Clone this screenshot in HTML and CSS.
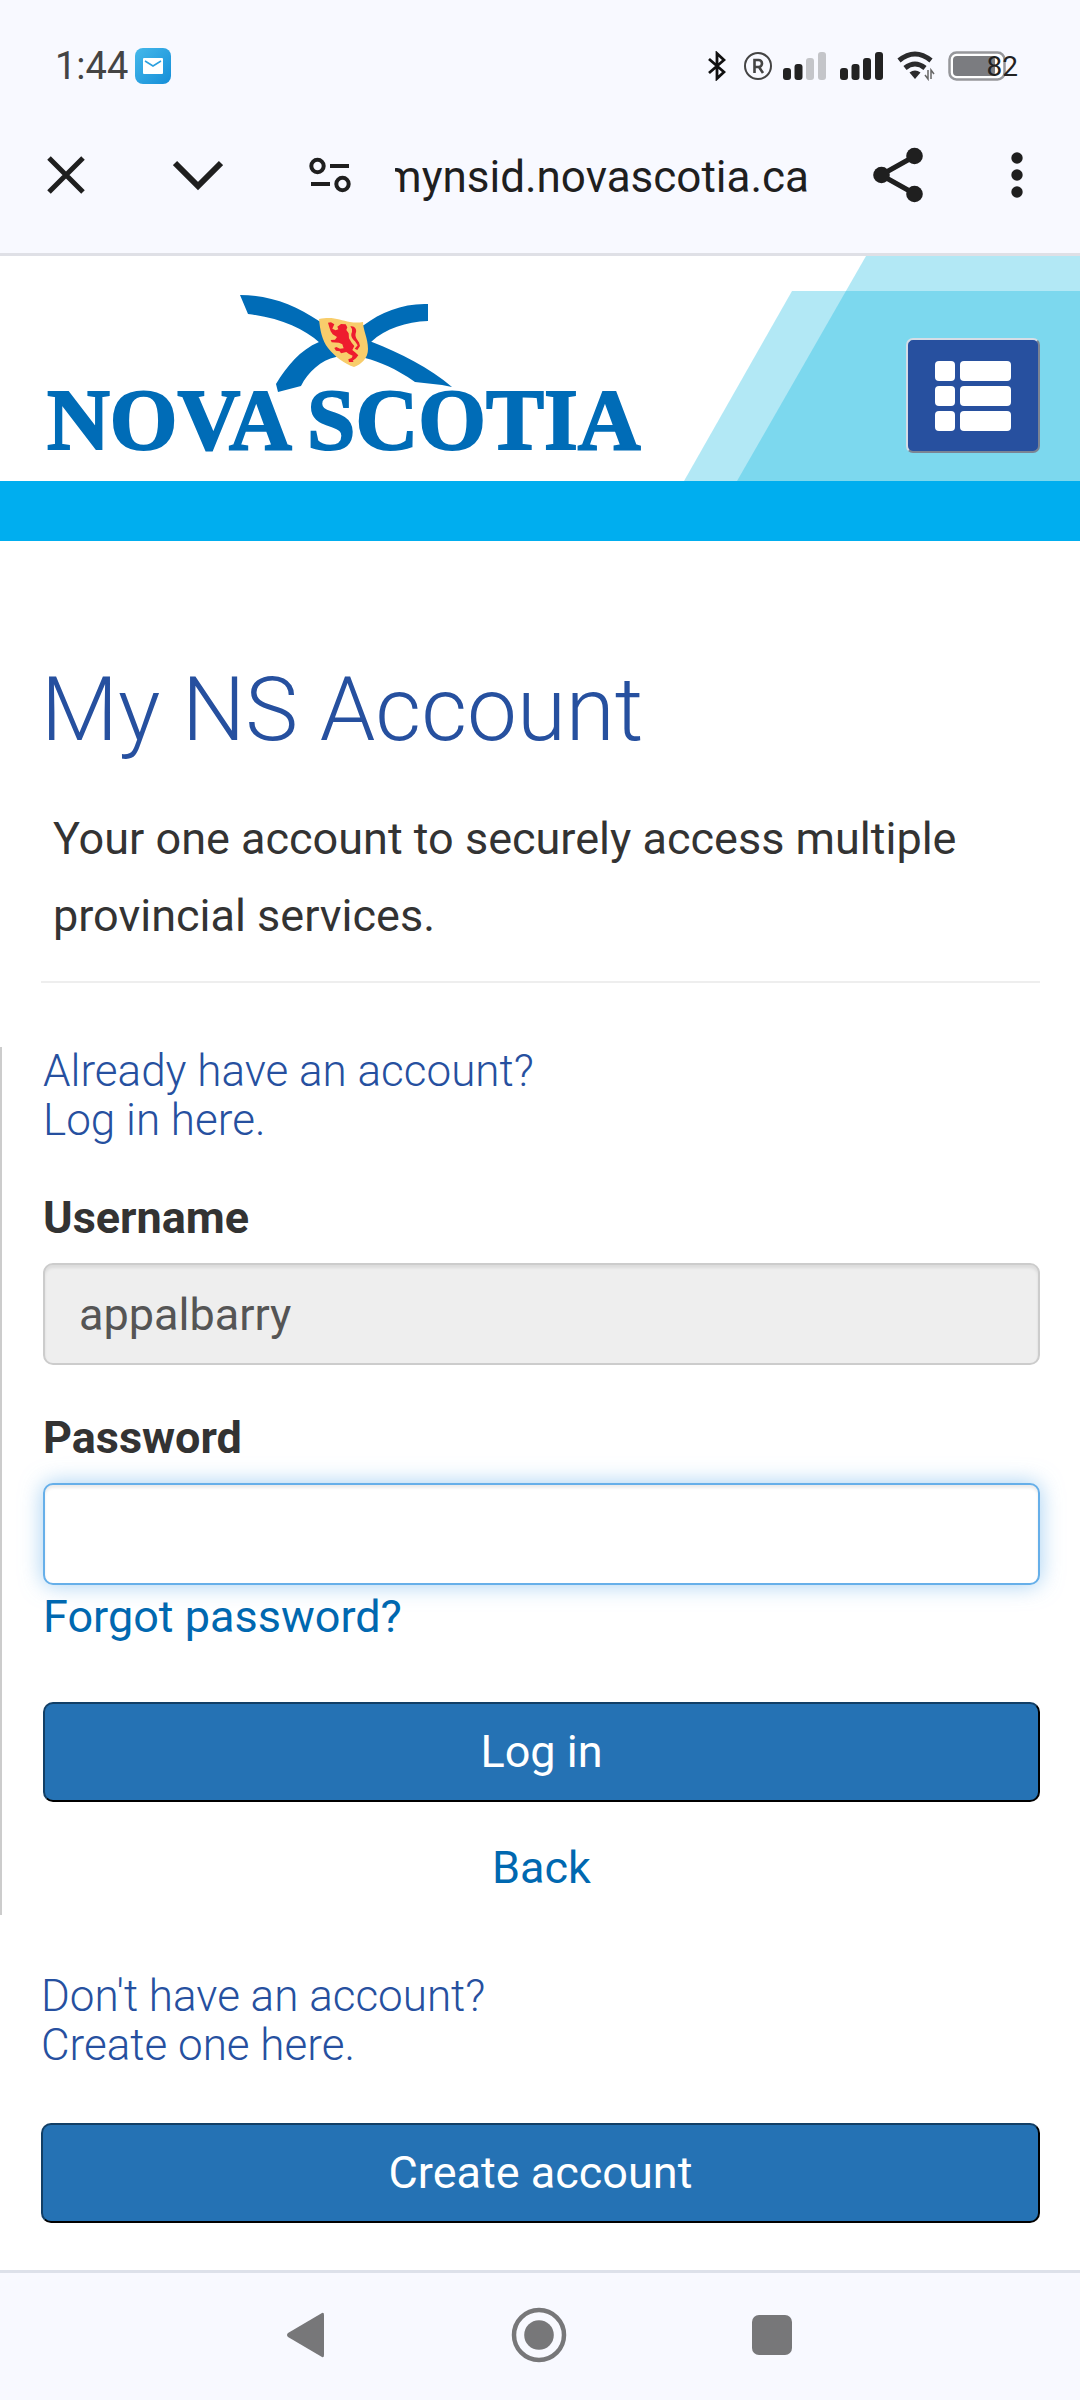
FILE: index.html
```html
<!DOCTYPE html>
<html lang="en">
<head>
  <meta charset="UTF-8">
  <meta name="viewport" content="width=device-width, initial-scale=1.0">
  <title>My NS Account</title>
  <link rel="stylesheet" href="styles.css">
</head>
<body>
  <!-- Status bar -->
  <div class="status-bar">
    <span class="clock">1:44</span>
    <svg class="mail-icon" width="36" height="36" viewBox="0 0 36 36">
      <defs>
        <linearGradient id="mail-bg" x1="0" y1="0" x2="1" y2="1">
          <stop offset="0" stop-color="#45b8ea"></stop>
          <stop offset="1" stop-color="#158ed8"></stop>
        </linearGradient>
      </defs>
      <rect width="36" height="36" rx="8" fill="url(#mail-bg)"></rect>
      <rect x="8" y="10" width="20" height="16" rx="1" fill="#fff"></rect>
      <path d="M10 13l8 5 8-5" fill="none" stroke="#2ba0df" stroke-width="1.5"></path>
    </svg>
    <div class="status-icons">
      <svg width="18" height="30" viewBox="0 0 18 30" fill="none" stroke="#111" stroke-width="2.8">
        <path d="M1 8l15 13-7 6.500V2.500L16 9 1 22"></path>
      </svg>
      <svg class="registered" width="30" height="30" viewBox="0 0 30 30" fill="none" stroke="#444" stroke-width="2">
        <circle cx="15" cy="15" r="13"></circle>
        <path d="M11.500 22V9h4a3.500 3.500 0 0 1 0 7h-4M16 16l4 6" stroke-width="2.600"></path>
      </svg>
      <svg class="signal" width="44" height="30" viewBox="0 0 44 30" fill="#222">
        <rect x="0" y="17" width="8" height="12" rx="3"></rect>
        <rect x="11.500" y="13" width="8" height="16" rx="3"></rect>
        <rect x="23" y="7" width="8" height="22" rx="3" fill="#c4c5c9"></rect>
        <rect x="35" y="1" width="8" height="28" rx="3" fill="#c4c5c9"></rect>
      </svg>
      <svg class="signal" width="44" height="30" viewBox="0 0 44 30" fill="#222">
        <rect x="0" y="17" width="8" height="12" rx="3"></rect>
        <rect x="11.500" y="13" width="8" height="16" rx="3"></rect>
        <rect x="23" y="7" width="8" height="22" rx="3"></rect>
        <rect x="35" y="1" width="8" height="28" rx="3"></rect>
      </svg>
      <svg width="38" height="30" viewBox="0 0 38 30" fill="none" stroke="#2b2b2d">
        <path d="M2 9.500Q18 -3.500 34 9.500" stroke-width="5"></path>
        <path d="M8 17Q18 9 28 17" stroke-width="5"></path>
        <path d="M12.500 21.500Q18 17.500 23.500 21.500L18 28Z" fill="#2b2b2d" stroke="none"></path>
        <path d="M31 19v9l-3-4M34 28v-9l3 4" stroke="#666" stroke-width="1.500"></path>
      </svg>
      <div class="battery">
        <svg width="58" height="30" viewBox="0 0 58 30">
          <rect x="1.500" y="1.500" width="55" height="27" rx="7" fill="#fff" stroke="#96979b" stroke-width="2.500"></rect>
          <rect x="5" y="5" width="42" height="20" rx="4" fill="#7b7c80"></rect>
        </svg>
        <span class="battery-level">82</span>
      </div>
    </div>
  </div>

  <!-- Browser toolbar -->
  <div class="toolbar">
    <button type="button" class="tool" aria-label="Close">
      <svg width="38" height="38" viewBox="0 0 38 38" fill="none" stroke="#1f1f1f" stroke-width="5">
        <path d="M2 2l34 34M36 2L2 36"></path>
      </svg>
    </button>
    <button type="button" class="tool tool-minimize" aria-label="Minimize">
      <svg width="50" height="38" viewBox="0 0 50 38" fill="none" stroke="#1f1f1f" stroke-width="6">
        <path d="M2 7l23 23L48 7"></path>
      </svg>
    </button>
    <button type="button" class="tool tool-site" aria-label="Site settings">
      <svg width="42" height="38" viewBox="0 0 42 38" fill="none" stroke="#1f1f1f" stroke-width="4">
        <circle cx="8.500" cy="10" r="6.200"></circle>
        <circle cx="33.500" cy="28" r="6.200"></circle>
        <path d="M21 10h19M2 28h19"></path>
      </svg>
    </button>
    <div class="url"><span>mynsid.novascotia.ca</span></div>
    <button type="button" class="tool tool-share" aria-label="Share">
      <svg width="50" height="56" viewBox="0 0 50 56" fill="#1f1f1f">
        <path d="M42 9L8 28l34 19" fill="none" stroke="#1f1f1f" stroke-width="5"></path>
        <circle cx="41.500" cy="9" r="8.300"></circle>
        <circle cx="8.500" cy="28" r="8.300"></circle>
        <circle cx="41.500" cy="47" r="8.300"></circle>
      </svg>
    </button>
    <button type="button" class="tool" aria-label="More options">
      <svg width="12" height="46" viewBox="0 0 12 46" fill="#1f1f1f">
        <circle cx="6" cy="6" r="5.700"></circle>
        <circle cx="6" cy="23" r="5.700"></circle>
        <circle cx="6" cy="40" r="5.700"></circle>
      </svg>
    </button>
  </div>

  <header class="site-header">
    <svg class="header-art" width="400" height="225" viewBox="0 0 400 225">
      <g fill="#00b4de" fill-opacity="0.3">
        <path d="M186 0H400V225H57Z"></path>
        <path d="M112 35H400V225H4Z"></path>
      </g>
    </svg>
    <a class="logo" href="#" aria-label="Nova Scotia">
      <svg width="610" height="185" viewBox="40 290 610 185">
        <g fill="#006cb7">
          <path d="M240 295C270 295 295 305 319 321L372 342C400 353 430 368 452 387L442 385L415 382C395 368 380 362 365 358L320 343C303 328 280 318 248 314Z"></path>
          <path d="M428 304C404 303 381 312 364 325L319 342C300 350 287 366 276 384L278 392L301 386C308 372 321 360 336 357L371 342C386 328 406 322 428 321Z"></path>
          <text class="wordmark" x="47" y="449">NOVA</text>
          <text class="wordmark" x="307" y="449">SCOTIA</text>
        </g>
        <path d="M319 319C333 316 340 320 350 322Q357 323 363 322C363 330 368 338 368 349C368 358 362 364 354 367C345 364 335 357 328 348C322 340 320 330 319 319Z" fill="#f8cd6b"></path>
        <g transform="translate(235 290) scale(0.3333)" fill="#ee1c2e">
          <path d="M279 98L288 97L298 103L292 116L302 121L310 118L307 110L318 102L332 103L337 112L334 120L341 130L342 145L350 158L358 168L352 180L362 188L370 196L363 205L353 212L356 216L342 216L340 208L350 204L353 197L342 192L334 186L318 190L314 184L303 182L298 174L304 171L315 176L326 175L322 163L312 158L290 157L287 150L300 149L306 141L293 133L287 124L283 112Z"></path>
          <path d="M346 109C358 106 366 117 363 127C358 140 366 148 372 157L375 168L367 180L359 176L368 166L360 154C350 145 346 136 351 126Q353 116 346 109Z"></path>
        </g>
      </svg>
    </a>
    <button type="button" class="menu-button" aria-label="Menu">
      <svg width="76" height="70" viewBox="0 0 76 70" fill="#fff">
        <rect x="0" y="0" width="20" height="20" rx="4"></rect>
        <rect x="25" y="0" width="51" height="20" rx="4"></rect>
        <rect x="0" y="25" width="20" height="20" rx="4"></rect>
        <rect x="25" y="25" width="51" height="20" rx="4"></rect>
        <rect x="0" y="50" width="20" height="20" rx="4"></rect>
        <rect x="25" y="50" width="51" height="20" rx="4"></rect>
      </svg>
    </button>
  </header>

  <main>
    <div class="intro">
      <h1>My NS Account</h1>
      <p>Your one account to securely access multiple provincial services.</p>
    </div>

    <!-- Log in form -->
    <form class="login">
      <h2>Already have an account?<br>Log in here.</h2>
      <div class="field">
        <label for="username">Username</label>
        <input type="text" id="username" value="appalbarry" readonly>
      </div>
      <div class="field">
        <label for="password">Password</label>
        <input type="password" id="password" class="active">
      </div>
      <a class="forgot" href="#">Forgot password?</a>
      <button type="submit" class="btn">Log in</button>
      <a class="back" href="#">Back</a>
    </form>

    <!-- Registration -->
    <section class="register">
      <h2>Don't have an account?<br>Create one here.</h2>
      <button type="button" class="btn">Create account</button>
    </section>
  </main>

  <!-- System navigation -->
  <nav class="system-nav">
    <button type="button" class="tool" aria-label="Back">
      <svg width="40" height="56" viewBox="0 0 40 56" fill="#777779">
        <path d="M36 6Q38 5 38 8V48Q38 51 36 50L2 30Q0 28 2 26Z"></path>
      </svg>
    </button>
    <button type="button" class="tool" aria-label="Home">
      <svg width="56" height="56" viewBox="0 0 56 56" fill="#777779">
        <circle cx="28" cy="28" r="25" fill="none" stroke="#777779" stroke-width="4.500"></circle>
        <circle cx="28" cy="28" r="14.800"></circle>
      </svg>
    </button>
    <button type="button" class="tool" aria-label="Recent apps">
      <svg width="40" height="56" viewBox="0 0 40 56" fill="#777779">
        <rect x="0" y="8" width="40" height="40" rx="7"></rect>
      </svg>
    </button>
  </nav>
</body>
</html>
```
FILE: styles.css
```css
:root {
  --chrome-bg: #f8f9ff;
  --chrome-border: #dfe0e6;
  --heading-color: #26509f;
  --text-color: #333;
  --link-color: #0068b0;
  --button-bg: #2572b4;
  --bar-color: #00aeef;
}

* {
  box-sizing: border-box;
}

body {
  margin: 0;
  min-height: 100vh;
  display: flex;
  flex-direction: column;
  font-family: Roboto, "Liberation Sans", sans-serif;
  font-size: 45px;
  line-height: 60px;
  color: var(--text-color);
  background-color: #fff;
}

svg {
  display: block;
  flex: none;
}

a {
  color: var(--link-color);
  text-decoration: none;
}

/* Status bar */
.status-bar {
  display: flex;
  align-items: center;
  height: 100px;
  padding: 32px 62px 0 55px;
  background-color: var(--chrome-bg);
}

.clock {
  font-size: 38px;
  color: #444;
}

.mail-icon {
  margin-left: 7px;
}

.status-icons {
  display: flex;
  align-items: center;
  margin-left: auto;
}

.registered {
  margin: 0 10px 0 17px;
}

.signal {
  margin-right: 13px;
}

.battery {
  position: relative;
  width: 70px;
  margin-left: 13px;
}

.battery-level {
  position: absolute;
  right: 0;
  top: 0;
  font-size: 28px;
  line-height: 32px;
  color: #222;
}

/* Browser toolbar */
.toolbar {
  display: flex;
  align-items: center;
  height: 156px;
  padding: 0 57px 3px 47px;
  background-color: var(--chrome-bg);
  border-bottom: 3px solid var(--chrome-border);
}

.tool {
  display: flex;
  padding: 0;
  border: none;
  background: none;
  cursor: pointer;
}

.tool-minimize {
  margin-left: 88px;
}

.tool-site {
  margin: 0 44px 0 86px;
}

/* Long hosts are cut off on the left */
.url {
  flex: 1;
  display: flex;
  justify-content: flex-end;
  min-width: 0;
  padding-top: 4px;
  overflow: hidden;
  font-size: 44px;
  white-space: nowrap;
  color: #1f1f1f;
}

.tool-share {
  margin: 0 88px 0 64px;
}

/* Site header */
.site-header {
  position: relative;
  display: flex;
  justify-content: space-between;
  align-items: flex-start;
  height: 285px;
  padding: 34px 40px 0;
  border-bottom: 60px solid var(--bar-color);
}

.header-art {
  position: absolute;
  top: 0;
  right: 0;
}

.logo {
  position: relative;
}

.wordmark {
  font-family: "Liberation Serif", serif;
  font-size: 87px;
  font-weight: bold;
  stroke: #006cb7;
  stroke-width: 2px;
}

.menu-button {
  position: relative;
  display: flex;
  justify-content: center;
  align-items: center;
  width: 134px;
  height: 115px;
  margin-top: 48px;
  padding: 0;
  border: 2px solid;
  border-color: #d5dde6 #7b8494 #7b8494 #d5dde6;
  border-radius: 7px;
  background-color: #27509f;
  cursor: pointer;
}

/* Content */
main {
  flex: 1;
}

h1,
h2 {
  margin: 0;
  font-weight: 300;
  color: var(--heading-color);
}

h1 {
  font-size: 89px;
  line-height: 96px;
}

h2 {
  font-size: 44px;
  line-height: 49px;
}

.intro {
  margin: 121px 40px 64px 41px;
  padding-bottom: 27px;
  border-bottom: 2px solid #eee;
}

.intro p {
  margin: 42px 12px 0;
  line-height: 77px;
}

.login {
  display: flex;
  flex-direction: column;
  padding: 0 40px 17px 41px;
  border-left: 2px solid #ccc;
}

.field {
  margin-top: 43px;
}

label {
  display: block;
  margin-bottom: 15px;
  font-weight: bold;
}

input {
  display: block;
  width: 100%;
  height: 102px;
  padding: 0 34px;
  border: 2px solid #ccc;
  border-radius: 10px;
  font: inherit;
  color: #555;
  background-color: #fff;
  box-shadow: inset 0 3px 3px rgba(0, 0, 0, 0.08);
}

input[readonly] {
  background-color: #eee;
}

input.active {
  border-color: #66afe9;
  box-shadow: inset 0 3px 3px rgba(0, 0, 0, 0.08), 0 0 22px rgba(102, 175, 233, 0.6);
}

.forgot {
  align-self: flex-start;
  margin: 2px 0 55px;
}

.btn {
  width: 100%;
  height: 100px;
  padding: 0;
  border: 2px solid;
  border-color: #123f66 #000 #000 #123f66;
  border-radius: 10px;
  font: inherit;
  color: #fff;
  background-color: var(--button-bg);
  cursor: pointer;
}

.back {
  align-self: center;
  margin-top: 36px;
}

.register {
  margin: 57px 40px 46px 41px;
}

.register .btn {
  margin-top: 53px;
}

/* System navigation */
.system-nav {
  display: flex;
  justify-content: space-between;
  align-items: center;
  height: 130px;
  padding: 0 288px 4px 286px;
  background-color: var(--chrome-bg);
  border-top: 3px solid #dde1ea;
}
```
